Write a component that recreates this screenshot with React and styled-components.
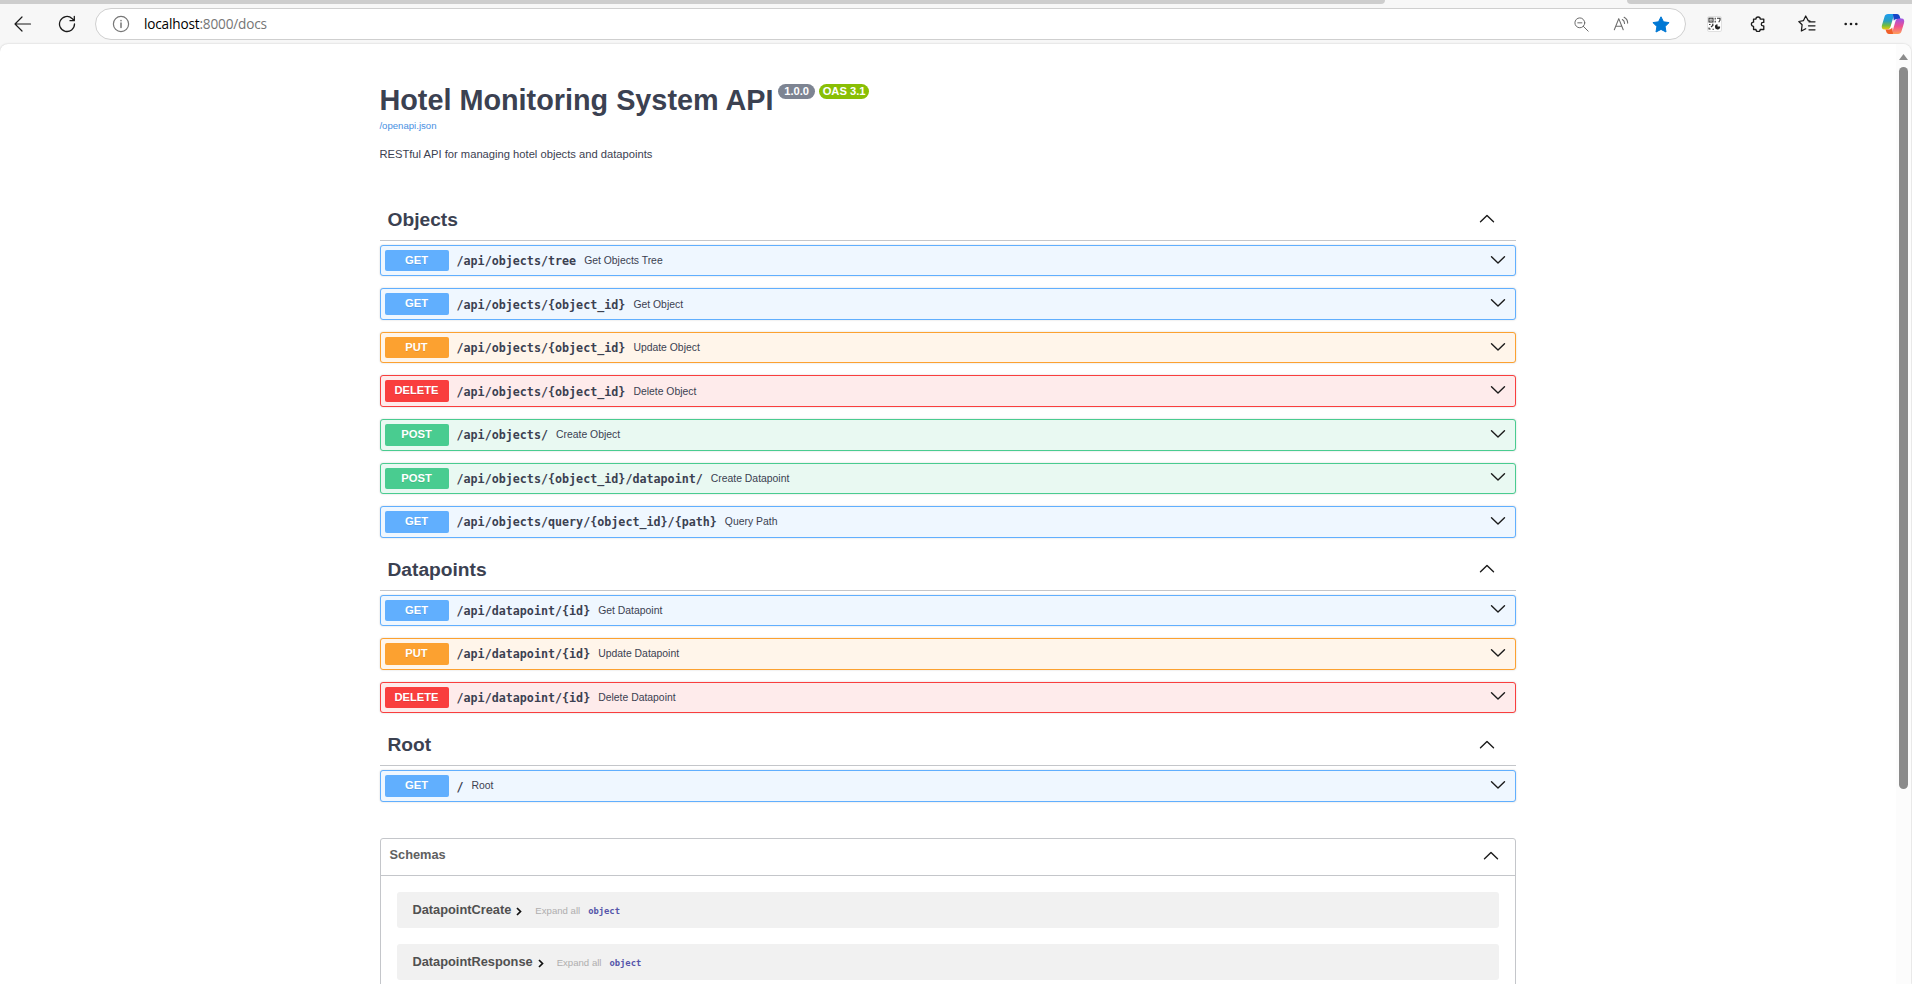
import React from "react";
import styled, { createGlobalStyle } from "styled-components";

const sans = `"Liberation Sans", Arial, sans-serif`;
const mono = `"DejaVu Sans Mono", Consolas, monospace`;

const GlobalStyle = createGlobalStyle`
  *, *::before, *::after { box-sizing: border-box; }
  html, body { margin: 0; padding: 0; overflow: hidden; background: #f7f7f7; }
  body { font-family: ${sans}; color: #3b4151; }
  h1, h2, h3, p { margin: 0; }
`;

const Window = styled.div`
  display: flex;
  flex-direction: column;
  width: 100vw;
  height: 100vh;
  overflow: hidden;
  background: #f7f7f7;
`;
const TabStrip = styled.div`
  display: flex;
  justify-content: space-between;
  flex: none;
  height: 4px;
`;
const InactiveTabs = styled.div`
  width: ${(p) => p.$width}px;
  background: #cdcdcd;
  border-radius: ${(p) => (p.$side === "left" ? "0 0 6px 0" : "0 0 0 6px")};
`;
const Toolbar = styled.div`
  display: flex;
  align-items: center;
  flex: none;
  height: 40px;
  padding: 0 7px 0 11px;
`;
const ToolButton = styled.span`
  display: flex;
  align-items: center;
  justify-content: center;
  flex: none;
  width: 24px;
  height: 24px;
  margin-left: ${(p) => p.$gap || 0}px;
  svg { display: block; }
`;
const AddressBar = styled.div`
  display: flex;
  align-items: center;
  flex: none;
  width: 1591px;
  height: 32px;
  margin-left: 16px;
  padding: 0 12px 0 13px;
  background: #fff;
  border: 1px solid #cfcfcf;
  border-radius: 16px;
`;
const Url = styled.span`
  flex: 1;
  margin-left: 11px;
  font: 13.6px/18px "Open Sans", "Noto Sans", sans-serif;
  letter-spacing: -0.17px;
  color: #767676;
  b { font-weight: 400; color: #000; }
`;
const Divider = styled.span`
  width: 1px;
  height: 16px;
  margin-left: 12px;
  background: #d0d0d0;
`;
const Viewport = styled.div`
  display: flex;
  flex: 1;
  min-height: 0;
  margin-right: 1px;
  background: #fff;
  border-radius: 8px 8px 0 0;
  box-shadow: 0 0 2px rgba(0, 0, 0, 0.22);
  overflow: hidden;
`;
const Page = styled.main`
  flex: 1;
  padding: 36px 380px 0;
  overflow: hidden;
`;
const ScrollTrack = styled.div`
  display: flex;
  flex-direction: column;
  align-items: center;
  width: 15px;
  padding-top: 10px;
  background: #fcfcfc;
`;
const ScrollThumb = styled.div`
  width: 9px;
  height: 722px;
  margin-top: 7px;
  border-radius: 4.5px;
  background: #8b8b8b;
`;

const Info = styled.header`
  height: 119.8px;
  margin-left: -0.6px;
`;
const TitleLine = styled.div`
  display: flex;
  align-items: flex-start;
`;
const Title = styled.h1`
  font-size: 28.8px;
  line-height: 40px;
  font-weight: 700;
  white-space: nowrap;
`;
const Version = styled.span`
  width: ${(p) => p.$width}px;
  height: 15px;
  margin: 4px 0 0 ${(p) => p.$gap}px;
  border-radius: 46px;
  background: ${(p) => p.$color};
  color: #fff;
  font-size: 11.2px;
  line-height: 15px;
  font-weight: 700;
  text-align: center;
  white-space: nowrap;
`;
const SpecLink = styled.a`
  display: block;
  font-size: 9.6px;
  line-height: 12px;
  color: #4990e2;
`;
const Description = styled.p`
  margin-top: 14px;
  font-size: 11.2px;
  line-height: 16px;
`;

const Section = styled.section`
  display: flex;
  flex-direction: column;
`;
const SectionHead = styled.div`
  display: flex;
  align-items: center;
  justify-content: space-between;
  height: 41px;
  padding: 0 21px 1px 7.5px;
  border-bottom: 1px solid #c4c6ca;
  margin-bottom: 4px;
`;
const SectionTitle = styled.h2`
  padding-top: 1px;
  font-size: 19.2px;
  line-height: 24px;
  font-weight: 700;
`;
const palette = {
  GET: ["#61affe", "#eff7ff"],
  PUT: ["#fca130", "#fff5ea"],
  DELETE: ["#f93e3e", "#feebeb"],
  POST: ["#49cc90", "#e9f9f2"],
};
const OperationRow = styled.div`
  display: flex;
  align-items: center;
  height: 31.55px;
  margin-bottom: 12px;
  padding: 4px 9px 4px 4px;
  border: 1px solid ${(p) => palette[p.$method][0]};
  border-radius: 3px;
  background: ${(p) => palette[p.$method][1]};
  box-shadow: 0 0 2px rgba(0, 0, 0, 0.19);
  > svg { margin-bottom: 2px; }
`;
const Method = styled.span`
  width: 64px;
  height: 21.55px;
  padding-right: 1px;
  border-radius: 2px;
  background: ${(p) => palette[p.$method][0]};
  color: #fff;
  font-size: 11.2px;
  line-height: 21px;
  font-weight: 700;
  text-align: center;
  text-shadow: 0 1px 0 rgba(0, 0, 0, 0.1);
`;
const Path = styled.span`
  margin-left: 7.5px;
  padding-top: 1px;
  font: 700 11.7px/16px ${mono};
  white-space: nowrap;
`;
const Summary = styled.span`
  flex: 1;
  margin-left: 8px;
  padding-top: 0.8px;
  font-size: 10.4px;
  line-height: 16px;
`;

const Models = styled.section`
  margin-top: 24px;
  height: 400px;
  border: 1px solid #c4c6ca;
  border-radius: 3px;
`;
const ModelsHead = styled.div`
  display: flex;
  align-items: center;
  justify-content: space-between;
  height: 37px;
  padding: 0 16px 0 8.5px;
  border-bottom: 1px solid #c4c6ca;
  > svg { margin-bottom: 2px; }
`;
const ModelsTitle = styled.h3`
  padding-bottom: 3.4px;
  font-size: 12.8px;
  line-height: 16px;
  color: #606060;
`;
const ModelBox = styled.div`
  display: flex;
  align-items: center;
  height: 36px;
  margin: 16px 16px 0;
  padding-left: 15.5px;
  border-radius: 3px;
  background: #f1f1f1;
`;
const ModelName = styled.span`
  font-size: 12.8px;
  line-height: 16px;
  font-weight: 700;
  color: #505050;
`;
const ModelChevron = styled.span`
  display: flex;
  margin: 3px 13px 0 5px;
`;
const ExpandAll = styled.span`
  padding-top: 2px;
  font-size: 9.6px;
  color: #afaeae;
`;
const ModelType = styled.span`
  margin-left: 8px;
  padding-top: 2px;
  font: 700 8.8px/12px ${mono};
  color: #5555aa;
`;

const Stroke = ({ size = 18, w = 1.2, color = "#222", children }) => (
  <svg width={size} height={size} viewBox="0 0 18 18" fill="none" stroke={color} strokeWidth={w} strokeLinecap="round" strokeLinejoin="round">
    {children}
  </svg>
);

const Chevron = ({ up }) => (
  <svg width="16" height="10" viewBox="0 0 16 10" fill="none" stroke="#1b1b1b" strokeWidth="1.4" strokeLinecap="round" strokeLinejoin="round">
    <path d={up ? "M1.5 7.800 8 1.500 14.5 7.800" : "M1.5 1.8 8 8 14.5 1.8"} />
  </svg>
);

const QrIcon = () => (
  <svg width="15" height="16" viewBox="0 0 15 16">
    <rect x="0.5" y="0.5" width="14" height="15" rx="1.5" fill="#fff" stroke="#e0e0e0" />
    <g fill="none" stroke="#333" strokeWidth="1.1">
      <rect x="2" y="2.200" width="4" height="3.800" />
      <path d="M8.200 1.800v1.800M8.200 4.800v1.700M10 2.200h3v2l-1.300 2M2 8.500h1.500M5 8.300h1.500M2 11.500V13h1.600M5.500 13.200h1.400M4 11l2.300-2" />
    </g>
    <path d="M3.500 3.600H4.600V4.700H3.500z" fill="#222" />
    <path d="M10.500 8.200v2.300h2.600a2.600 2.600 0 1 1-2.600-2.300z" fill="#222" />
  </svg>
);

const CopilotIcon = () => (
  <svg width="24" height="22" viewBox="0 0 24 22">
    <defs>
      <linearGradient id="cool" x1="0" y1="0" x2="0" y2="1">
        <stop offset="0" stopColor="#1c9df0" />
        <stop offset=".45" stopColor="#2a9fc0" />
        <stop offset=".75" stopColor="#76bd3c" />
        <stop offset="1" stopColor="#f2c80c" />
      </linearGradient>
      <linearGradient id="warm" x1="0" y1="0" x2="0" y2="1">
        <stop offset="0" stopColor="#9b55e8" />
        <stop offset=".5" stopColor="#ee5090" />
        <stop offset="1" stopColor="#ffa05a" />
      </linearGradient>
    </defs>
    <path d="M7 1h8.2c-1.500 0-2.300 1-2.700 2.400L9.600 13.500C9 15.500 8 16.500 6 16.500H3.500C1 16.500.3 14.500 1 12L3.500 3.700C4 2 5.200 1 7 1z" fill="url(#cool)" />
    <path d="M12 1h4c1.500 0 2.400 1 2.800 2.400L19.500 6h-3.500c-2 0-2.700.8-3.200 2z" fill="#1746c8" />
    <path d="M17 21H8.800c1.500 0 2.300-1 2.700-2.400L14.400 8.500C15 6.500 16 5.500 18 5.500h2.500c2.500 0 3.200 2 2.500 4.500l-2.500 8.300C20 20 18.800 21 17 21z" fill="url(#warm)" />
    <path d="M12 21H8c-1.500 0-2.400-1-2.800-2.400L4.500 16.500H8c2 0 2.700-1.300 3.200-2.500z" fill="#f0602a" />
    <path d="M12.200 7.500h1.500L11.700 14.800H9.600z" fill="#fff" />
  </svg>
);

const sections = [
  {
    name: "Objects",
    operations: [
      ["GET", "/api/objects/tree", "Get Objects Tree"],
      ["GET", "/api/objects/{object_id}", "Get Object"],
      ["PUT", "/api/objects/{object_id}", "Update Object"],
      ["DELETE", "/api/objects/{object_id}", "Delete Object"],
      ["POST", "/api/objects/", "Create Object"],
      ["POST", "/api/objects/{object_id}/datapoint/", "Create Datapoint"],
      ["GET", "/api/objects/query/{object_id}/{path}", "Query Path"],
    ],
  },
  {
    name: "Datapoints",
    operations: [
      ["GET", "/api/datapoint/{id}", "Get Datapoint"],
      ["PUT", "/api/datapoint/{id}", "Update Datapoint"],
      ["DELETE", "/api/datapoint/{id}", "Delete Datapoint"],
    ],
  },
  { name: "Root", operations: [["GET", "/", "Root"]] },
];

const Operation = ({ method, path, summary }) => (
  <OperationRow $method={method}>
    <Method $method={method}>{method}</Method>
    <Path>{path}</Path>
    <Summary>{summary}</Summary>
    <Chevron />
  </OperationRow>
);

const BrowserToolbar = () => (
  <Toolbar>
    <ToolButton>
      <Stroke color="#1b1b1b"><path d="M16.500 9H1M8 2 1 9l7 7" /></Stroke>
    </ToolButton>
    <ToolButton $gap={20}>
      <Stroke color="#1b1b1b" w={1.3}><path d="M16.500 9A7.500 7.500 0 1 1 14 3.400L16 5.500M16.300 1.500v4.200h-4.300" /></Stroke>
    </ToolButton>
    <AddressBar>
      <ToolButton>
        <Stroke color="#767676"><circle cx="9" cy="9" r="7.600" /><path d="M9 8v4.500M9 5.500v.2" strokeWidth="1.500" /></Stroke>
      </ToolButton>
      <Url><b>localhost</b>:8000/docs</Url>
      <ToolButton>
        <Stroke size={15} color="#6b6b6b"><circle cx="7" cy="7" r="5.900" /><path d="M11.200 11.200 17 17M4.500 7h5" /></Stroke>
      </ToolButton>
      <ToolButton $gap={16}>
        <Stroke size={16} color="#6b6b6b"><path d="M1.500 15.500 6.500 3l5 12.500M3.200 11.500h6.600M10.500 4q2.500 1.500 2.500 4.500M12.500 1.500q4 2.200 4 6.500" /></Stroke>
      </ToolButton>
      <ToolButton $gap={16}>
        <svg width="18" height="17" viewBox="0 0 18 17"><path d="m9 .8 2.500 5 5.600.8-4 3.900.9 5.500L9 13.400 4 16l.9-5.500-4-3.900 5.600-.8z" fill="#0078d4" stroke="#0078d4" strokeLinejoin="round" /></svg>
      </ToolButton>
    </AddressBar>
    <ToolButton $gap={16}><QrIcon /></ToolButton>
    <ToolButton $gap={20}>
      <Stroke size={16} color="#1b1b1b" w={1.5}><path d="M4 3.500h2.700a2.400 2.400 0 0 1 4.800 0H15.500v3.700h-.8a2 2 0 0 0 0 4h.8v4H11.500a2.400 2.400 0 0 1-4.800 0H4v-3.500a2.400 2.400 0 0 1 0-4.800z" /></Stroke>
    </ToolButton>
    <Divider />
    <ToolButton $gap={13}>
      <Stroke color="#1b1b1b" w={1.25}><path d="m12 6-1.800-.4L7.700 1 5.500 5.600.8 6.500l3.300 3.300L3.400 16l4.300-2.300M11 6.800h6M10.500 10.800H17M11 14.800H17" /></Stroke>
    </ToolButton>
    <ToolButton $gap={20}>
      <svg width="16" height="4" viewBox="0 0 16 4" fill="#1b1b1b"><circle cx="2.700" cy="2" r="1.300" /><circle cx="8" cy="2" r="1.300" /><circle cx="13.300" cy="2" r="1.300" /></svg>
    </ToolButton>
    <ToolButton $gap={18}><CopilotIcon /></ToolButton>
  </Toolbar>
);

export default function App() {
  return (
    <Window>
      <GlobalStyle />
      <TabStrip>
        <InactiveTabs $side="left" $width={1385} />
        <InactiveTabs $side="right" $width={285} />
      </TabStrip>
      <BrowserToolbar />
      <Viewport>
        <Page>
          <Info>
            <TitleLine>
              <Title>Hotel Monitoring System API</Title>
              <Version $color="#7d8492" $width={37} $gap={4.600}>1.0.0</Version>
              <Version $color="#89bf04" $width={50} $gap={4}>OAS 3.1</Version>
            </TitleLine>
            <SpecLink>/openapi.json</SpecLink>
            <Description>RESTful API for managing hotel objects and datapoints</Description>
          </Info>
          {sections.map((section) => (
            <Section key={section.name}>
              <SectionHead>
                <SectionTitle>{section.name}</SectionTitle>
                <Chevron up />
              </SectionHead>
              {section.operations.map(([method, path, summary]) => (
                <Operation key={method + path} method={method} path={path} summary={summary} />
              ))}
            </Section>
          ))}
          <Models>
            <ModelsHead>
              <ModelsTitle>Schemas</ModelsTitle>
              <Chevron up />
            </ModelsHead>
            {["DatapointCreate", "DatapointResponse"].map((name) => (
              <ModelBox key={name}>
                <ModelName>{name}</ModelName>
                <ModelChevron>
                  <svg width="6" height="9" viewBox="0 0 6 9" fill="none" stroke="#111" strokeWidth="1.700"><path d="M1 1l3.500 3.500L1 8" /></svg>
                </ModelChevron>
                <ExpandAll>Expand all</ExpandAll>
                <ModelType>object</ModelType>
              </ModelBox>
            ))}
          </Models>
        </Page>
        <ScrollTrack>
          <svg width="9" height="6" viewBox="0 0 10 6" preserveAspectRatio="none"><path d="M5 0l5 6H0z" fill="#8b8b8b" /></svg>
          <ScrollThumb />
        </ScrollTrack>
      </Viewport>
    </Window>
  );
}
